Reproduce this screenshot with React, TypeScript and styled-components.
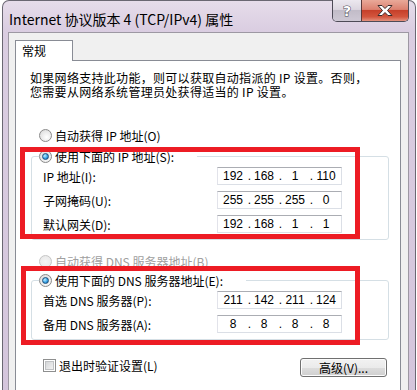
import styled, { createGlobalStyle } from "styled-components";

const GlobalStyle = createGlobalStyle`
    html, body {
        margin: 0;
        padding: 0;
        background: #ffffff;
        overflow: hidden;
    }
    body {
        font-family: "Noto Sans CJK SC", "Noto Sans", sans-serif;
        font-size: 12px;
        color: #000;
    }
`;

const Desktop = styled.div`
    padding-left: 2px;
    height: 390px;
`;

const Window = styled.div`
    width: 414px;
    height: 400px;
    box-sizing: border-box;
    border: 1px solid #6a6772;
    border-bottom: none;
    border-radius: 7px 7px 0 0;
    background: linear-gradient(#e6dcea 0px, #dacde1 30px, #d4c5dc 100%);
    display: flex;
    flex-direction: column;
`;

const TitleBar = styled.div`
    height: 31px;
    display: flex;
    justify-content: space-between;
    padding: 0 6px 0 6px;
    flex-shrink: 0;
`;

const Title = styled.div`
    padding-top: 10px;
    font-size: 14px;
    line-height: 16px;
    color: #000;
`;

const Caption = styled.div`
    display: flex;
    align-self: flex-start;
    margin-top: -1px;
    height: 22px;
    border: 1px solid #4e4b57;
    border-top: none;
    border-radius: 0 0 5px 5px;
    overflow: hidden;
    box-sizing: border-box;
`;

const CaptionButton = styled.div<{ $close?: boolean }>`
    width: ${(p) => (p.$close ? "46px" : "28px")};
    height: 100%;
    display: flex;
    align-items: center;
    justify-content: center;
    border-left: ${(p) => (p.$close ? "1px solid #5a3a3a" : "none")};
    background: ${(p) =>
        p.$close
            ? "linear-gradient(#e9a999 0%, #dc8170 45%, #c6402a 50%, #d3553d 80%, #e3927f 100%)"
            : "linear-gradient(#ece8ef 0%, #dcd6e0 45%, #c2bcc8 50%, #cec8d4 100%)"};
`;

const HelpGlyph = styled.span`
    font-family: "DejaVu Sans", sans-serif;
    font-weight: bold;
    font-size: 14px;
    line-height: 14px;
    color: #ffffff;
    -webkit-text-stroke: 1px #4a4752;
    paint-order: stroke fill;
`;

const Client = styled.div`
    flex: 1;
    margin: 0 6px 0 5px;
    border: 1px solid #9d98a3;
    border-bottom: none;
    background: #f0f0f0;
    padding: 7px 7px 0 6px;
    display: flex;
    flex-direction: column;
`;

const TabStrip = styled.div`
    display: flex;
    position: relative;
    z-index: 1;
`;

const Tab = styled.div`
    width: 50px;
    height: 20px;
    border: 1px solid #898c95;
    border-bottom: none;
    background: #ffffff;
    padding-left: 6px;
    box-sizing: content-box;
    line-height: 19px;
    margin-bottom: -1px;
`;

const Pane = styled.div`
    flex: 1;
    position: relative;
    background: #ffffff;
    border: 1px solid #898c95;
    border-bottom: none;
    padding: 10px 11px 0 15px;
`;

const Intro = styled.p`
    margin: 0 0 0 -1px;
    line-height: 14px;
    letter-spacing: 0.3px;
`;

const RadioRow = styled.label<{ $disabled?: boolean }>`
    display: flex;
    align-items: center;
    height: 16px;
    padding-left: 8px;
    gap: 3px;
    color: ${(p) => (p.$disabled ? "#a0a0a0" : "#000")};
`;

const RadioDot = styled.span<{ $checked?: boolean; $disabled?: boolean }>`
    width: 11px;
    height: 11px;
    border-radius: 50%;
    border: 1px solid ${(p) => (p.$disabled ? "#c6c6c6" : "#8a8a8a")};
    background: ${(p) =>
        p.$disabled
            ? "radial-gradient(circle at 50% 50%, #f4f4f4 0%, #e6e6e6 100%)"
            : "radial-gradient(circle at 60% 65%, #ffffff 0%, #e2e2e2 70%, #cfcfcf 100%)"};
    display: flex;
    align-items: center;
    justify-content: center;
    flex-shrink: 0;

    &::after {
        content: "";
        display: ${(p) => (p.$checked ? "block" : "none")};
        width: 5px;
        height: 5px;
        border-radius: 50%;
        border: 1px solid #1d4f7a;
        background: radial-gradient(circle at 35% 35%, #bff0ff 0%, #3aa3e6 55%, #0b5c9c 100%);
    }
`;

const Group = styled.fieldset<{ $top: number }>`
    margin: ${(p) => p.$top}px 0 0 0;
    padding: 0;
    border: 1px solid #d5dfe5;
    border-radius: 3px;
    min-width: 0;
`;

const GroupLegend = styled.legend`
    margin-left: 7px;
    padding: 0 23px 0 0;
`;

const Rows = styled.div`
    display: flex;
    flex-direction: column;
    gap: 6px;
    padding: 3px 0 6px 11px;
`;

const FieldRow = styled.div`
    display: flex;
    align-items: center;
    height: 18px;
`;

const FieldLabel = styled.span`
    width: 174px;
    flex-shrink: 0;
`;

const IpBox = styled.div`
    width: 125px;
    height: 18px;
    box-sizing: border-box;
    border: 1px solid #dbdfe6;
    border-top-color: #abadb3;
    border-left-color: #e2e3ea;
    background: #fff;
    display: flex;
    align-items: center;
    padding-left: 2px;
    font-family: "Liberation Sans", Arial, sans-serif;
    font-size: 12px;
`;

const Octet = styled.span`
    width: 26px;
    text-align: center;
`;

const Dot = styled.span`
    width: 5px;
    text-align: right;
`;

const BottomRow = styled.div`
    display: flex;
    justify-content: space-between;
    align-items: flex-start;
    margin-top: 18px;
    padding: 0 2px 0 12px;
`;

const CheckRow = styled.label`
    display: flex;
    align-items: center;
    gap: 3px;
    margin-top: -1px;
    height: 16px;
`;

const CheckBox = styled.span`
    width: 9px;
    height: 9px;
    border: 1px solid #8e8f8f;
    background: #fff;
    padding: 1px;
    box-sizing: content-box;
    display: flex;
    flex-shrink: 0;

    &::after {
        content: "";
        flex: 1;
        border: 1px solid #c0c2c4;
        background: linear-gradient(135deg, #d4d6d8 0%, #f2f2f2 100%);
    }
`;

const PushButton = styled.button`
    width: 87px;
    height: 19px;
    box-sizing: border-box;
    border: 1px solid #707070;
    border-radius: 3px;
    background: linear-gradient(#f2f2f2 0%, #ebebeb 50%, #dddddd 51%, #cfcfcf 100%);
    box-shadow: inset 0 0 0 1px #fcfcfc;
    font-family: "Noto Sans CJK SC", sans-serif;
    font-size: 12px;
    line-height: 15px;
    padding: 0;
    color: #000;
`;

const Marker = styled.div`
    position: absolute;
    border: 5px solid #ed1c24;
    box-sizing: border-box;
    pointer-events: none;
`;

function IpField({ value }: { value: string }) {
    const parts = value.split(".");
    return (
        <IpBox>
            {parts.map((p, i) => (
                <span key={i} style={{ display: "contents" }}>
                    {i > 0 && <Dot>.</Dot>}
                    <Octet>{p}</Octet>
                </span>
            ))}
        </IpBox>
    );
}

function CloseIcon() {
    return (
        <svg width="18" height="13" viewBox="0 0 18 13">
            <path
                d="M2 1.5 H6 L9 4.5 L12 1.5 H16 L11.5 6.5 L16 11.5 H12 L9 8.5 L6 11.5 H2 L6.5 6.5 Z"
                fill="#ffffff"
                stroke="#3b2a2a"
                strokeWidth="1"
                strokeLinejoin="round"
            />
        </svg>
    );
}

export default function App() {
    return (
        <>
            <GlobalStyle />
            <Desktop>
                <Window>
                    <TitleBar>
                        <Title>Internet 协议版本 4 (TCP/IPv4) 属性</Title>
                        <Caption>
                            <CaptionButton>
                                <HelpGlyph>?</HelpGlyph>
                            </CaptionButton>
                            <CaptionButton $close>
                                <CloseIcon />
                            </CaptionButton>
                        </Caption>
                    </TitleBar>

                    <Client>
                        <TabStrip>
                            <Tab>常规</Tab>
                        </TabStrip>
                        <Pane>
                            <Intro>
                                如果网络支持此功能，则可以获取自动指派的 IP 设置。否则，
                                <br />
                                您需要从网络系统管理员处获得适当的 IP 设置。
                            </Intro>

                            <RadioRow style={{ marginTop: 28 }}>
                                <RadioDot />
                                自动获得 IP 地址(O)
                            </RadioRow>

                            <Group $top={5}>
                                <GroupLegend>
                                    <RadioRow as="span" style={{ paddingLeft: 0 }}>
                                        <RadioDot $checked />
                                        使用下面的 IP 地址(S):
                                    </RadioRow>
                                </GroupLegend>
                                <Rows>
                                    <FieldRow>
                                        <FieldLabel>IP 地址(I):</FieldLabel>
                                        <IpField value="192.168.1.110" />
                                    </FieldRow>
                                    <FieldRow>
                                        <FieldLabel>子网掩码(U):</FieldLabel>
                                        <IpField value="255.255.255.0" />
                                    </FieldRow>
                                    <FieldRow>
                                        <FieldLabel>默认网关(D):</FieldLabel>
                                        <IpField value="192.168.1.1" />
                                    </FieldRow>
                                </Rows>
                            </Group>

                            <RadioRow $disabled style={{ marginTop: 13 }}>
                                <RadioDot $disabled />
                                自动获得 DNS 服务器地址(B)
                            </RadioRow>

                            <Group $top={3}>
                                <GroupLegend>
                                    <RadioRow as="span" style={{ paddingLeft: 0 }}>
                                        <RadioDot $checked />
                                        使用下面的 DNS 服务器地址(E):
                                    </RadioRow>
                                </GroupLegend>
                                <Rows>
                                    <FieldRow>
                                        <FieldLabel>首选 DNS 服务器(P):</FieldLabel>
                                        <IpField value="211.142.211.124" />
                                    </FieldRow>
                                    <FieldRow>
                                        <FieldLabel>备用 DNS 服务器(A):</FieldLabel>
                                        <IpField value="8.8.8.8" />
                                    </FieldRow>
                                </Rows>
                            </Group>

                            <BottomRow>
                                <CheckRow>
                                    <CheckBox />
                                    退出时验证设置(L)
                                </CheckRow>
                                <PushButton>高级(V)...</PushButton>
                            </BottomRow>

                            <Marker style={{ left: 4, top: 86, width: 340, height: 92 }} />
                            <Marker style={{ left: 5, top: 205, width: 339, height: 79 }} />
                        </Pane>
                    </Client>
                </Window>
            </Desktop>
        </>
    );
}
